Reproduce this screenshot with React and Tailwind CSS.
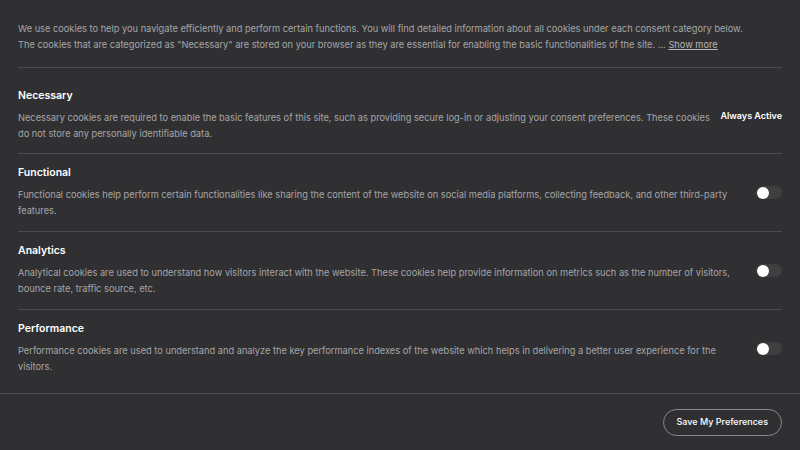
const sections = [
  {
    title: 'Necessary',
    desc: 'Necessary cookies are required to enable the basic features of this site, such as providing secure log-in or adjusting your consent preferences. These cookies do not store any personally identifiable data.',
    always: true,
  },
  {
    title: 'Functional',
    desc: 'Functional cookies help perform certain functionalities like sharing the content of the website on social media platforms, collecting feedback, and other third-party features.',
  },
  {
    title: 'Analytics',
    desc: 'Analytical cookies are used to understand how visitors interact with the website. These cookies help provide information on metrics such as the number of visitors, bounce rate, traffic source, etc.',
  },
  {
    title: 'Performance',
    desc: 'Performance cookies are used to understand and analyze the key performance indexes of the website which helps in delivering a better user experience for the visitors.',
  },
];

function Toggle() {
  return (
    <div className="w-[26px] h-[13px] rounded-full bg-[#3f3f42] flex items-center px-[1px] shrink-0">
      <div className="w-[12px] h-[12px] rounded-full bg-white" />
    </div>
  );
}

export default function App() {
  return (
    <div className="w-[800px] h-[450px] bg-[#303033] flex flex-col overflow-hidden" style={{ fontFamily: 'Inter, "Noto Sans", sans-serif' }}>
      <div className="px-[18px] flex-1">
        <p className="pt-[21px] pb-[14px] text-[9.25px] leading-[16px] text-[#a6a6a8] border-b border-[#4b4b4e]">
          We use cookies to help you navigate efficiently and perform certain functions. You will find detailed information about all cookies under each consent category below.
          <br />
          The cookies that are categorized as "Necessary" are stored on your browser as they are essential for enabling the basic functionalities of the site. ...{' '}
          <span className="underline text-[#b5b5b7]">Show more</span>
        </p>
        {sections.map((s, i) => (
          <div
            key={s.title}
            className={
              'flex items-center ' +
              (i === 0 ? 'pt-[21px] pb-[11px] gap-[8px] ' : 'pt-[12px] pb-[12px] gap-[16px] ') +
              (i < sections.length - 1 ? 'border-b border-[#4b4b4e]' : '')
            }
          >
            <div className="flex-1">
              <div className="text-[10.5px] leading-[14px] font-semibold text-white">{s.title}</div>
              <div className="mt-[7px] text-[9.25px] leading-[16px] text-[#a6a6a8]">{s.desc}</div>
            </div>
            {s.always ? (
              <div className="text-[9px] font-semibold text-white whitespace-nowrap">Always Active</div>
            ) : (
              <Toggle />
            )}
          </div>
        ))}
      </div>
      <div className="border-t border-[#4b4b4e] h-[57px] flex items-center justify-end px-[18px]">
        <button className="h-[27px] px-[13px] rounded-full border border-[#8a8a8c] text-white text-[9px] font-medium">
          Save My Preferences
        </button>
      </div>
    </div>
  );
}
